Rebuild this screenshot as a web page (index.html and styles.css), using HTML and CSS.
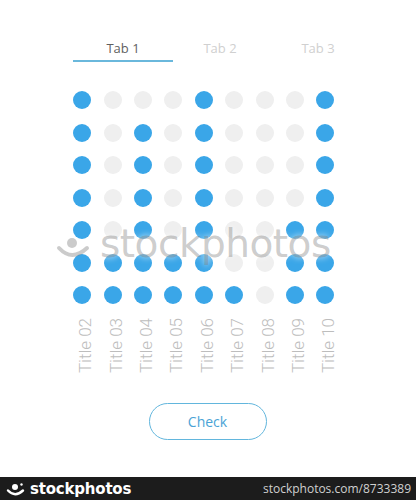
FILE: index.html
```html
<!DOCTYPE html>
<html>
<head>
<meta charset="utf-8">
<link rel="stylesheet" href="styles.css">
</head>
<body>
<div class="page">
  <div class="tabs">
    <div class="tab active">Tab 1</div>
    <div class="tab">Tab 2</div>
    <div class="tab">Tab 3</div>
  </div>
  <div class="grid">
    <span class="d on"></span><span class="d"></span><span class="d"></span><span class="d"></span><span class="d on"></span><span class="d"></span><span class="d"></span><span class="d"></span><span class="d on"></span>
    <span class="d on"></span><span class="d"></span><span class="d on"></span><span class="d"></span><span class="d on"></span><span class="d"></span><span class="d"></span><span class="d"></span><span class="d on"></span>
    <span class="d on"></span><span class="d"></span><span class="d on"></span><span class="d"></span><span class="d on"></span><span class="d"></span><span class="d"></span><span class="d"></span><span class="d on"></span>
    <span class="d on"></span><span class="d"></span><span class="d on"></span><span class="d"></span><span class="d on"></span><span class="d"></span><span class="d"></span><span class="d"></span><span class="d on"></span>
    <span class="d on"></span><span class="d"></span><span class="d on"></span><span class="d"></span><span class="d on"></span><span class="d"></span><span class="d"></span><span class="d on"></span><span class="d on"></span>
    <span class="d on"></span><span class="d on"></span><span class="d on"></span><span class="d on"></span><span class="d on"></span><span class="d"></span><span class="d"></span><span class="d on"></span><span class="d on"></span>
    <span class="d on"></span><span class="d on"></span><span class="d on"></span><span class="d on"></span><span class="d on"></span><span class="d on"></span><span class="d"></span><span class="d on"></span><span class="d on"></span>
  </div>
  <div class="titles">
    <span class="t">Title 02</span><span class="t">Title 03</span><span class="t">Title 04</span><span class="t">Title 05</span><span class="t">Title 06</span><span class="t">Title 07</span><span class="t">Title 08</span><span class="t">Title 09</span><span class="t">Title 10</span>
  </div>
  <div class="actions">
    <button class="check">Check</button>
  </div>
  <div class="watermark">
    <svg class="wm-icon" width="34" height="26" viewBox="0 0 34 26"><circle cx="16" cy="9" r="5" fill="currentColor"/><path d="M3 14 Q16 28 31 14" stroke="currentColor" stroke-width="4" fill="none" stroke-linecap="round"/></svg>
    <span class="wm-text">stockphotos</span>
  </div>
</div>
<div class="bar">
  <div class="logo">
    <svg width="20" height="16" viewBox="0 0 20 16"><circle cx="9" cy="6" r="3" fill="#fff"/><path d="M2 9.5 Q9 17 17 9.5" stroke="#fff" stroke-width="2.4" fill="none" stroke-linecap="round"/><circle cx="15.5" cy="3.5" r="1.2" fill="#fff"/></svg>
    <span>stockphotos</span>
  </div>
  <div class="url">stockphotos.com/8733389</div>
</div>
</body>
</html>
```
FILE: styles.css
```css
* { box-sizing: border-box; }
html, body { margin: 0; padding: 0; background: #fff; }
body { width: 416px; height: 500px; overflow: hidden; font-family: "Open Sans", sans-serif; }
.page { position: relative; height: 477px; }
.tabs { display: flex; padding: 37px 0 0 73px; }
.tab { width: 98px; text-align: center; font-size: 13px; line-height: 22px; color: #d0d0d0; padding-bottom: 1px; border-bottom: 2px solid transparent; }
.tab.active { color: #5f5f5f; border-bottom-color: #6ab8dc; width: 100px; margin-right: -2px; }
.grid { display: grid; grid-template-columns: repeat(9, 30.4px); grid-auto-rows: 32.5px; margin: 22px 0 0 67px; }
.d { width: 18px; height: 18px; border-radius: 50%; background: #efefef; align-self: center; justify-self: center; }
.d.on { background: #3aa6e8; }
.titles { display: grid; grid-template-columns: repeat(9, 30.4px); align-items: start; margin: 6px 0 0 70px; }
.t { writing-mode: vertical-rl; transform: rotate(180deg); justify-self: center; font-family: Roboto, sans-serif; font-weight: 300; font-size: 17px; color: #bdbdbd; line-height: 18px; }
.actions { display: flex; justify-content: center; padding: 30px 0 0 0; margin-left: -1px; }
.check { width: 118px; height: 37px; border: 1.5px solid #62b6dd; border-radius: 19px; background: #fff; color: #4aa3d6; font-family: "Open Sans", sans-serif; font-size: 14px; }
.watermark { position: absolute; left: 56px; top: 221px; display: flex; align-items: center; gap: 10px; color: rgba(125,125,125,0.4); }
.wm-icon { margin-top: 6px; }
.wm-text { font-family: "DejaVu Sans", sans-serif; font-size: 39px; font-weight: 400; letter-spacing: -0.5px; text-shadow: 0 0 6px rgba(255,255,255,0.8); }
.bar { height: 23px; background: #1c1c1c; display: flex; align-items: center; justify-content: space-between; padding: 0 5px 0 6px; }
.logo { display: flex; align-items: center; gap: 4px; color: #fff; font-size: 15px; font-weight: 700; font-family: "DejaVu Sans", sans-serif; letter-spacing: -0.2px; }
.url { color: #d0d0d0; font-size: 12px; font-family: "Open Sans", sans-serif; }
```
